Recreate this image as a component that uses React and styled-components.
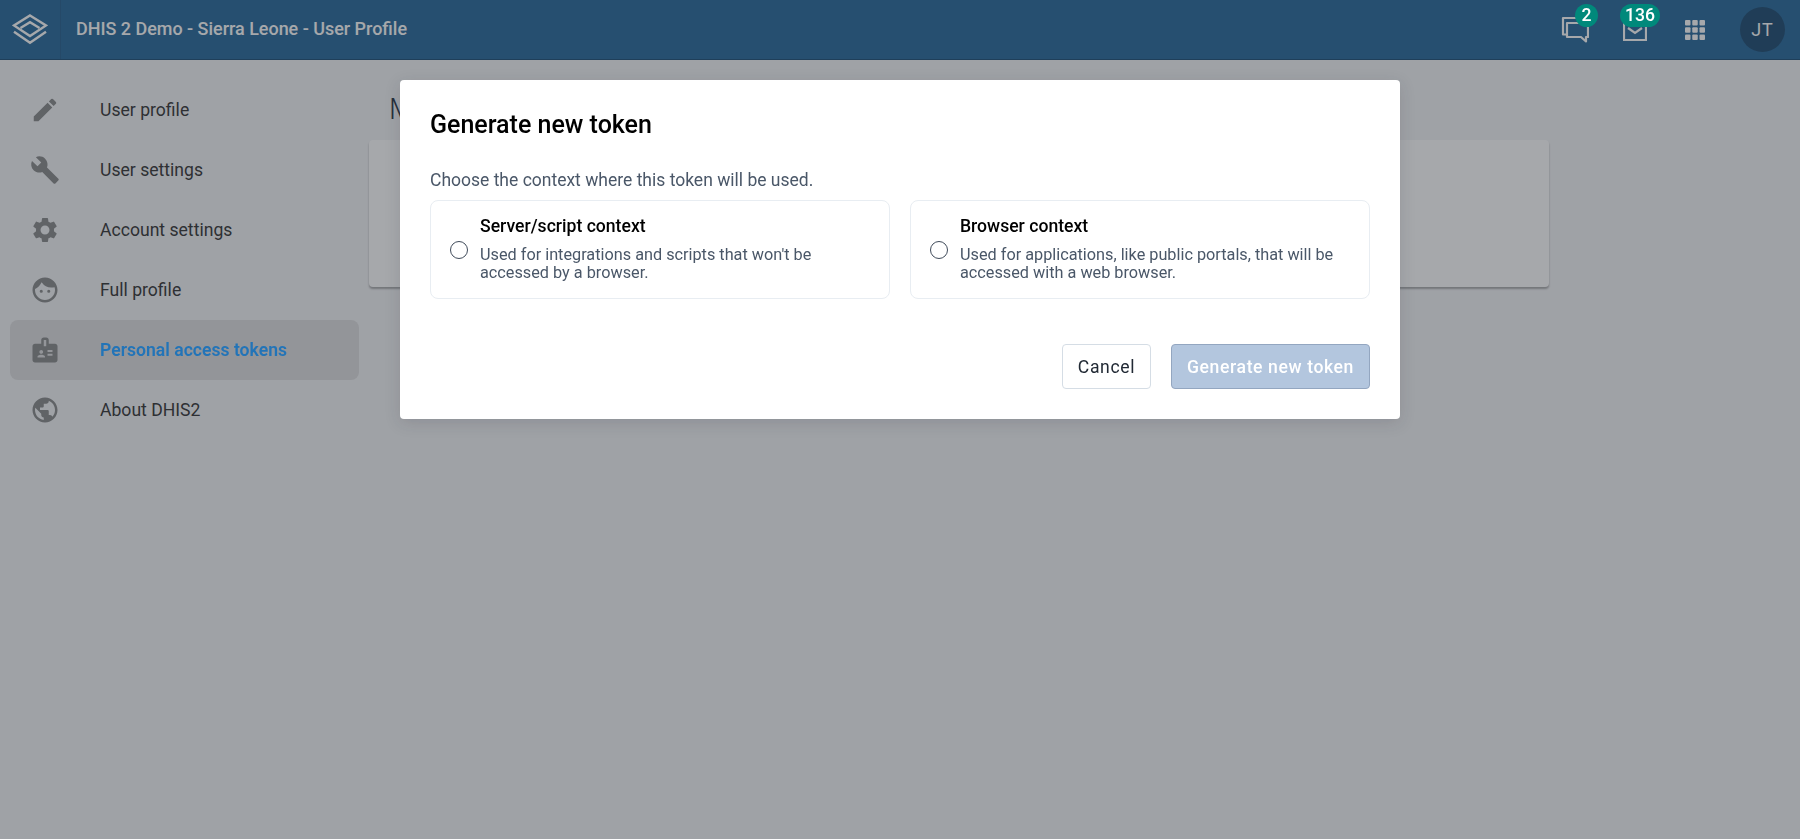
import React from "react";
import styled, { createGlobalStyle } from "styled-components";
import { MdEdit, MdBuild, MdSettings, MdFace, MdBadge, MdPublic } from "react-icons/md";

const Global = createGlobalStyle`
  html, body { margin: 0; padding: 0; background: #f4f5f7; }
  body { font-family: Roboto, "Noto Sans", sans-serif; min-height: 839px; overflow: hidden; }
  * { box-sizing: border-box; }
`;

const Header = styled.header`
  display: flex; align-items: center; height: 60px; background: #2b6b9d;
  border-bottom: 1px solid #1f5078; color: #fff;
`;
const LogoCell = styled.div`
  width: 61px; height: 59px; display: flex; align-items: center; justify-content: center;
  border-right: 1px solid #28628f;
`;
const AppTitle = styled.div`
  margin-left: 15px; flex: 1; font-size: 17.95px; font-weight: 500; padding-bottom: 2px;
`;
const HeaderActions = styled.div`
  display: flex; align-items: center; padding-right: 15px;
`;
const IconSlot = styled.div`
  position: relative; width: 60px; height: 59px; display: flex; align-items: center; justify-content: center;
`;
const Avatar = styled.div`
  width: 45px; height: 45px; border-radius: 50%; background: #214e73; display: flex; align-items: center;
  justify-content: center; font-size: 18px; letter-spacing: 1px; margin-left: 15px; color: #fff;
`;

const Layout = styled.div`display: flex; align-items: flex-start;`;
const Sidebar = styled.nav`
  width: 369px; padding: 20px 10px 0; display: flex; flex-direction: column; flex: none;
`;
const NavItem = styled.div`
  height: 60px; display: flex; align-items: center; padding-left: 20px; border-radius: 8px;
  background: ${p => p.$active ? "#dfdfe1" : "transparent"};
  svg { width: 30px; height: 30px; color: #8a8c8c; flex: none; }
`;
const NavLabel = styled.span`
  margin-left: 40px; font-size: 17.6px;
  color: ${p => p.$active ? "#2274b8" : "#373737"};
  font-weight: ${p => p.$active ? 600 : 400};
  position: relative;
  z-index: ${p => p.$active ? 20 : "auto"};
`;
const Content = styled.main`flex: 1; padding-right: 251px;`;
const PageTitle = styled.h1`
  margin: 0; padding: 32px 0 0 20px; height: 80px; font-size: 29px; font-weight: 300; line-height: 34px; color: #2a3646;
`;
const Panel = styled.section`
  height: 147px; background: #fff; border-radius: 4px; box-shadow: 0 2px 2px rgba(0,0,0,.3);
`;

const Overlay = styled.div`
  position: fixed; inset: 0; background: rgba(33, 37, 45, 0.4); display: flex; justify-content: center; align-items: flex-start;
  padding-top: 80px; z-index: 10;
`;
const Badge = styled.span`
  position: absolute; z-index: 20; top: 4px; left: ${p => p.$left}px; height: 23px; min-width: 23px; padding: 0 5px;
  border-radius: 12px; background: #00897b; color: #fff; font-size: 17.6px; font-weight: 500;
  display: flex; align-items: center; justify-content: center; line-height: 1;
`;
const Modal = styled.div`
  width: 1000px; height: 339px; background: #fff; border-radius: 4px; padding: 31px 30px 30px;
  box-shadow: 0 4px 16px rgba(33,41,52,.15); display: flex; flex-direction: column;
`;
const ModalTitle = styled.h2`
  margin: 0; font-size: 25px; font-weight: 500; line-height: 28px; color: #000;
`;
const Lead = styled.p`
  margin: 31px 0 0; font-size: 17.5px; line-height: 20px; color: #4a5768;
`;
const Cards = styled.div`display: grid; grid-template-columns: 1fr 1fr; gap: 20px; margin-top: 10px;`;
const Card = styled.label`
  height: 99px; border: 1px solid #e8edf2; border-radius: 8px; display: flex; align-items: center; padding: 0 19px;
`;
const Radio = styled.span`
  width: 18px; height: 18px; border: 1.5px solid #404b5a; border-radius: 50%; flex: none; background: #fff;
`;
const CardBody = styled.div`margin-left: 12px; padding-bottom: 2px;`;
const CardTitle = styled.div`font-size: 17.6px; font-weight: 500; line-height: 20px; color: #000; margin-bottom: 10px;`;
const CardText = styled.div`font-size: 16.25px; line-height: 18px; color: #4a5768;`;
const Actions = styled.div`display: flex; justify-content: flex-end; gap: 20px; margin-top: 45px;`;
const Button = styled.button`
  height: 45px; padding: 0 15px; border-radius: 4px; font-family: inherit; font-size: 17.6px; letter-spacing: 0.6px;
  font-weight: ${p => p.$primary ? 500 : 400};
  color: ${p => p.$primary ? "#ffffff" : "#212934"};
  background: ${p => p.$primary ? "#b3c6de" : "#ffffff"};
  border: 1px solid ${p => p.$primary ? "#93a6c0" : "#d5dde5"};
`;

const Logo = () => (
  <svg width="36" height="31" viewBox="0 0 36 31" fill="none" stroke="#fff" strokeWidth="2.4">
    <path d="M18 1.5 L34 11.5 L18 22 L2 11.5 Z" />
    <path d="M8.5 14 L18 8.2 L27.5 14" />
    <path d="M2 17.7 L18 28.7 L34 17.7" />
  </svg>
);
const Chat = () => (
  <svg width="28" height="27" viewBox="0 0 28 27" fill="none" stroke="#fff" strokeWidth="2.2" strokeLinejoin="round">
    <path d="M6 18.5 H2 V2 H21 V6" />
    <path d="M6 7 H27 V21 H25 V25.5 L20 21 H6 Z" />
  </svg>
);
const Mail = () => (
  <svg width="24" height="22" viewBox="0 0 24 22" fill="none" stroke="#fff" strokeWidth="2.2">
    <path d="M1 1 H23 V21 H1 Z" />
    <path d="M5 9 L12 14 L19 9" />
  </svg>
);
const Grid = () => (
  <svg width="20" height="20" viewBox="0 0 20 20" fill="#fff">
    {[0, 7.25, 14.5].flatMap(y => [0, 7.25, 14.5].map(x => (
      <rect key={`${x}-${y}`} x={x} y={y} width="5.5" height="5.5" rx="1" />
    )))}
  </svg>
);

const nav = [
  [MdEdit, "User profile"],
  [MdBuild, "User settings"],
  [MdSettings, "Account settings"],
  [MdFace, "Full profile"],
  [MdBadge, "Personal access tokens", true],
  [MdPublic, "About DHIS2"],
];

export default function App() {
  return (
    <>
      <Global />
      <Header>
        <LogoCell><Logo /></LogoCell>
        <AppTitle>DHIS 2 Demo - Sierra Leone - User Profile</AppTitle>
        <HeaderActions>
          <IconSlot><Chat /><Badge $left={30}>2</Badge></IconSlot>
          <IconSlot><Mail /><Badge $left={15}>136</Badge></IconSlot>
          <IconSlot><Grid /></IconSlot>
          <Avatar>JT</Avatar>
        </HeaderActions>
      </Header>
      <Layout>
        <Sidebar>
          {nav.map(([Icon, label, active]) => (
            <NavItem key={label} $active={active}>
              <Icon />
              <NavLabel $active={active}>{label}</NavLabel>
            </NavItem>
          ))}
        </Sidebar>
        <Content>
          <PageTitle>Manage personal access tokens</PageTitle>
          <Panel />
        </Content>
      </Layout>
      <Overlay>
        <Modal>
          <ModalTitle>Generate new token</ModalTitle>
          <Lead>Choose the context where this token will be used.</Lead>
          <Cards>
            <Card>
              <Radio />
              <CardBody>
                <CardTitle>Server/script context</CardTitle>
                <CardText>Used for integrations and scripts that won't be<br />accessed by a browser.</CardText>
              </CardBody>
            </Card>
            <Card>
              <Radio />
              <CardBody>
                <CardTitle>Browser context</CardTitle>
                <CardText>Used for applications, like public portals, that will be<br />accessed with a web browser.</CardText>
              </CardBody>
            </Card>
          </Cards>
          <Actions>
            <Button>Cancel</Button>
            <Button $primary>Generate new token</Button>
          </Actions>
        </Modal>
      </Overlay>
    </>
  );
}
